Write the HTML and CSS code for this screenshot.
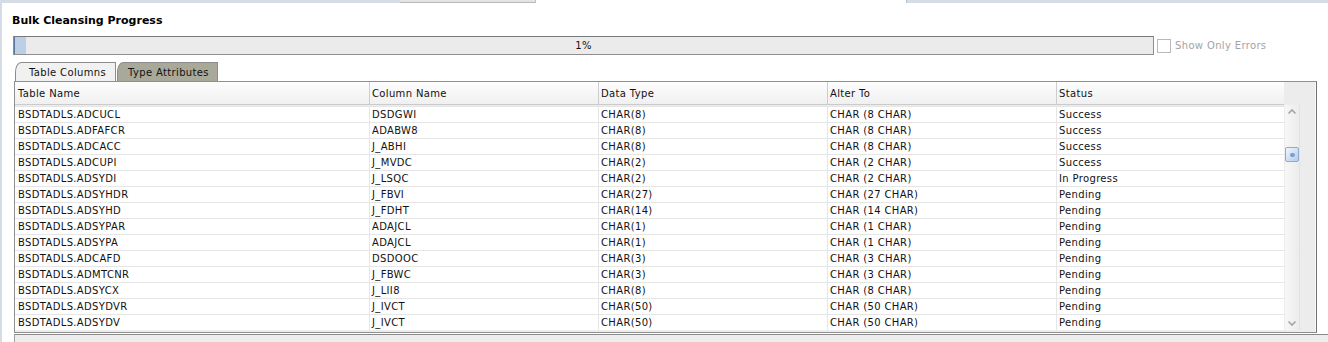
FILE: index.html
```html
<!DOCTYPE html>
<html lang="en">
<head>
  <meta charset="UTF-8" />
  <title>Bulk Cleansing Progress</title>
  <link rel="stylesheet" href="styles.css">
</head>
<body>

<div class="window">
  <div class="top-strip">
    <div class="strip-left"></div>
    <div class="strip-tab"></div>
    <div class="strip-active"></div>
    <div class="strip-right"></div>
  </div>

  <h1 class="title">Bulk Cleansing Progress</h1>

  <div class="progress-row">
    <div class="progress">
      <div class="progress-fill" style="width: 11px"></div>
      <span class="progress-text">1%</span>
    </div>
    <label class="errors-only">
      <span class="check-box"></span>
      Show Only Errors
    </label>
  </div>

  <div class="tabs">
    <div class="tab active">Table Columns</div>
    <div class="tab other">Type Attributes</div>
  </div>

  <div class="pane">
    <div class="grid">
      <div class="grid-head">
        <div class="cell">Table Name</div>
        <div class="cell">Column Name</div>
        <div class="cell">Data Type</div>
        <div class="cell">Alter To</div>
        <div class="cell">Status</div>
      </div>
      <div class="grid-body" id="rows"></div>
    </div>

    <div class="scrollbar">
      <div class="arrow">
        <svg width="14" height="14" viewBox="0 0 14 14"><polyline points="3.5,8.5 7,5 10.5,8.5" fill="none" stroke="#a4a4a4" stroke-width="1.6"/></svg>
      </div>
      <div class="thumb"><span class="thumb-dot"></span></div>
      <div class="track-fill"></div>
      <div class="arrow">
        <svg width="14" height="14" viewBox="0 0 14 14"><polyline points="3.5,5.5 7,9 10.5,5.5" fill="none" stroke="#a4a4a4" stroke-width="1.6"/></svg>
      </div>
    </div>
    <div class="pane-edge"></div>
  </div>

  <div class="bottom-bar"></div>
</div>

<script>
  const rows = [
    ['BSDTADLS.ADCUCL', 'DSDGWI', 'CHAR(8)', 'CHAR (8 CHAR)', 'Success'],
    ['BSDTADLS.ADFAFCR', 'ADABW8', 'CHAR(8)', 'CHAR (8 CHAR)', 'Success'],
    ['BSDTADLS.ADCACC', 'J_ABHI', 'CHAR(8)', 'CHAR (8 CHAR)', 'Success'],
    ['BSDTADLS.ADCUPI', 'J_MVDC', 'CHAR(2)', 'CHAR (2 CHAR)', 'Success'],
    ['BSDTADLS.ADSYDI', 'J_LSQC', 'CHAR(2)', 'CHAR (2 CHAR)', 'In Progress'],
    ['BSDTADLS.ADSYHDR', 'J_FBVI', 'CHAR(27)', 'CHAR (27 CHAR)', 'Pending'],
    ['BSDTADLS.ADSYHD', 'J_FDHT', 'CHAR(14)', 'CHAR (14 CHAR)', 'Pending'],
    ['BSDTADLS.ADSYPAR', 'ADAJCL', 'CHAR(1)', 'CHAR (1 CHAR)', 'Pending'],
    ['BSDTADLS.ADSYPA', 'ADAJCL', 'CHAR(1)', 'CHAR (1 CHAR)', 'Pending'],
    ['BSDTADLS.ADCAFD', 'DSDOOC', 'CHAR(3)', 'CHAR (3 CHAR)', 'Pending'],
    ['BSDTADLS.ADMTCNR', 'J_FBWC', 'CHAR(3)', 'CHAR (3 CHAR)', 'Pending'],
    ['BSDTADLS.ADSYCX', 'J_LII8', 'CHAR(8)', 'CHAR (8 CHAR)', 'Pending'],
    ['BSDTADLS.ADSYDVR', 'J_IVCT', 'CHAR(50)', 'CHAR (50 CHAR)', 'Pending'],
    ['BSDTADLS.ADSYDV', 'J_IVCT', 'CHAR(50)', 'CHAR (50 CHAR)', 'Pending']
  ];

  const body = document.getElementById('rows');
  rows.forEach(r => {
    const div = document.createElement('div');
    div.className = 'grid-row';
    div.innerHTML = r.map(v => `<div class="cell">${v}</div>`).join('');
    body.appendChild(div);
  });
</script>

</body>
</html>
```

FILE: styles.css
```css
body {
  margin: 0;
  font-family: 'DejaVu Sans', sans-serif;
  font-size: 10px;
  letter-spacing: 0.35px;
  color: #111;
  background-color: #fff;
}

.window {
  height: 342px;
  border-left: 2px solid #d5dce5;
  display: flex;
  flex-direction: column;
  overflow: hidden;
}

/* cropped tab strip of the parent window */
.top-strip {
  height: 3px;
  display: flex;
}

.strip-left {
  width: 398px;
  background-color: #d5dce5;
}

.strip-tab {
  width: 135px;
  background-color: #e4e4e4;
  border-bottom: 1px solid #b8b8b8;
}

.strip-active {
  width: 370px;
  background-color: #fff;
  border-left: 1px solid #b8c2cf;
  border-right: 1px solid #b8c2cf;
}

.strip-right {
  flex: 1;
  background-color: #d5dce5;
}

.title {
  margin: 11px 0 0 10px;
  font-size: 11px;
  font-weight: bold;
  letter-spacing: 0;
  line-height: 14px;
  color: #000;
}

.progress-row {
  display: flex;
  align-items: center;
  margin: 8px 0 0 11px;
  height: 19px;
}

.progress {
  width: 1139px;
  height: 17px;
  border: 1px solid #8e8e8e;
  border-top-color: #7a7a7a;
  background-color: #ebebeb;
  display: flex;
  justify-content: center;
  align-items: center;
  position: relative;
}

.progress-fill {
  position: absolute;
  left: 0;
  top: 0;
  bottom: 0;
  background-color: #bccfe6;
  border-left: 1px solid #56779f;
}

.progress-text {
  position: relative;
  color: #111;
}

.errors-only {
  display: flex;
  align-items: center;
  gap: 4px;
  margin-left: 3px;
  color: #a3a3a3;
}

.check-box {
  width: 12px;
  height: 12px;
  border: 1px solid #b9b9b9;
  background-color: #fff;
}

.tabs {
  display: flex;
  margin: 7px 0 0 13px;
  height: 19px;
}

.tab {
  width: 98px;
  height: 17px;
  line-height: 18px;
  text-align: center;
  border: 1px solid #8c8c8c;
  border-bottom: none;
  border-top-left-radius: 6px 10px;
  padding-top: 1px;
}

.tab.active {
  background-color: #f1f1f1;
  padding-left: 4px;
  width: 95px;
}

.tab.other {
  background-color: #a9a99a;
  margin-left: 1px;
  padding-left: 2px;
  width: 97px;
}

.pane {
  margin-left: 12px;
  width: 1301px;
  height: 250px;
  border: 1px solid #909090;
  border-right: 1px solid #6f6f6f;
  background-color: #ececec;
  display: flex;
}

.grid {
  width: 1269px;
  display: flex;
  flex-direction: column;
}

.grid-head,
.grid-row {
  display: grid;
  grid-template-columns: 354px 229px 229px 229px 228px;
}

.grid-head {
  height: 22px;
  border-bottom: 1px solid #cbcbcb;
  background: linear-gradient(#fdfdfd, #f0f0f0);
}

.grid-head .cell {
  padding-top: 2px;
  line-height: 20px;
  border-left: 1px solid #cdcdcd;
}

.grid-body {
  margin-top: 1px;
  background-color: #fff;
}

.grid-row {
  height: 16px;
  border-top: 1px solid #e6e6e6;
  box-sizing: border-box;
}

.grid-row .cell {
  line-height: 15px;
  border-left: 1px solid #e6e6e6;
}

.cell {
  padding-left: 2px;
  white-space: nowrap;
  overflow: hidden;
}

.grid-head .cell:first-child,
.grid-row .cell:first-child {
  border-left: none;
  padding-left: 3px;
}

.scrollbar {
  width: 14px;
  margin: 23px 0 2px 1px;
  background: linear-gradient(to right, #f7f7f7, #ececec);
  border-right: 1px solid #e2e2e2;
  display: flex;
  flex-direction: column;
}

.arrow {
  height: 14px;
}

.arrow svg {
  display: block;
}

.thumb {
  margin-top: 28px;
  width: 14px;
  height: 15px;
  border: 1px solid #8eabd2;
  border-radius: 2px;
  background: linear-gradient(135deg, #f2f6fc, #b4cbec);
  display: flex;
  justify-content: center;
  align-items: center;
  box-sizing: border-box;
}

.thumb-dot {
  width: 5px;
  height: 4px;
  background-color: #7d9fd0;
  border-radius: 2px;
}

.track-fill {
  flex: 1;
}

.pane-edge {
  flex: 1;
  border-right: 1px solid #fafafa;
}

.bottom-bar {
  margin: 1px 0 0 12px;
  flex: 1;
  border-top: 1px solid #8a8a8a;
  border-left: 1px solid #a0a0a0;
  background-color: #ededed;
}
```
